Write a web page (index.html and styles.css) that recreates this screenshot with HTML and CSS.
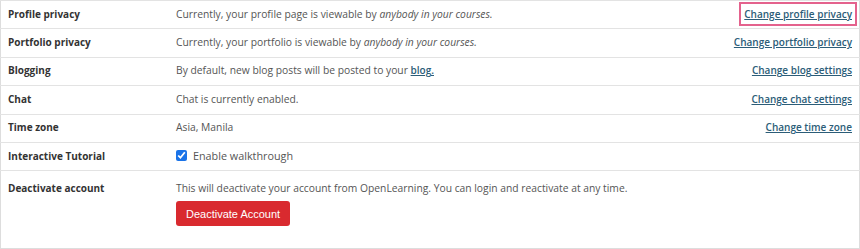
FILE: index.html
```html
<!DOCTYPE html>
<html lang="en">
<head>
    <meta charset="UTF-8">
    <title>Account settings</title>
    <link rel="stylesheet" href="styles.css">
</head>
<body>
    <table class="settings">
        <tr>
            <th>Profile privacy</th>
            <td>Currently, your profile page is viewable by <em>anybody in your courses.</em></td>
            <td class="action"><a href="#" class="focused">Change profile privacy</a></td>
        </tr>
        <tr>
            <th>Portfolio privacy</th>
            <td>Currently, your portfolio is viewable by <em>anybody in your courses.</em></td>
            <td class="action"><a href="#">Change portfolio privacy</a></td>
        </tr>
        <tr>
            <th>Blogging</th>
            <td>By default, new blog posts will be posted to your <a href="#">blog.</a></td>
            <td class="action"><a href="#">Change blog settings</a></td>
        </tr>
        <tr>
            <th>Chat</th>
            <td>Chat is currently enabled.</td>
            <td class="action"><a href="#">Change chat settings</a></td>
        </tr>
        <tr>
            <th>Time zone</th>
            <td>Asia, Manila</td>
            <td class="action"><a href="#">Change time zone</a></td>
        </tr>
        <tr>
            <th>Interactive Tutorial</th>
            <td><label class="check"><input type="checkbox" checked> Enable walkthrough</label></td>
            <td class="action"></td>
        </tr>
        <tr class="last">
            <th>Deactivate account</th>
            <td>
                This will deactivate your account from OpenLearning. You can login and reactivate at any time.
                <div><button type="button" class="danger">Deactivate Account</button></div>
            </td>
            <td class="action"></td>
        </tr>
    </table>
</body>
</html>
```

FILE: styles.css
```css
body {
    margin: 0;
    font-family: "Open Sans", sans-serif;
    font-size: 10.3px;
    color: #555;
    background: #fff;
}

.settings {
    width: 860px;
    border-collapse: collapse;
    border: 1px solid #ddd;
}

.settings tr {
    height: 28.4px;
    border-top: 1px solid #e3e3e3;
}

.settings th,
.settings td {
    padding: 0 7px 2px;
    vertical-align: middle;
    white-space: nowrap;
}

.settings th {
    width: 154px;
    text-align: left;
    font-size: 10px;
    font-weight: 700;
    color: #333;
}

.settings em {
    font-style: italic;
}

.settings a {
    color: #2c5d78;
    font-size: 10px;
    font-weight: 600;
    text-decoration: underline;
}

.action {
    text-align: right;
    padding-right: 6px;
}

.focused {
    outline: 2px solid #e4628d;
    outline-offset: 3px;
}

.check {
    display: flex;
    align-items: center;
    gap: 6px;
    font-size: 10.8px;
}

.check input {
    margin: 0;
    width: 11px;
    height: 11px;
    accent-color: #1a73e8;
}

.settings .last {
    height: 78px;
}

.settings .last th,
.settings .last td {
    vertical-align: top;
    padding-top: 10px;
}

.danger {
    margin-top: 6px;
    height: 25px;
    padding: 0 10px;
    background: #d92a2f;
    color: #fff;
    border: none;
    border-radius: 3px;
    font-family: "Liberation Sans", Arial, sans-serif;
    font-size: 11px;
}
```
